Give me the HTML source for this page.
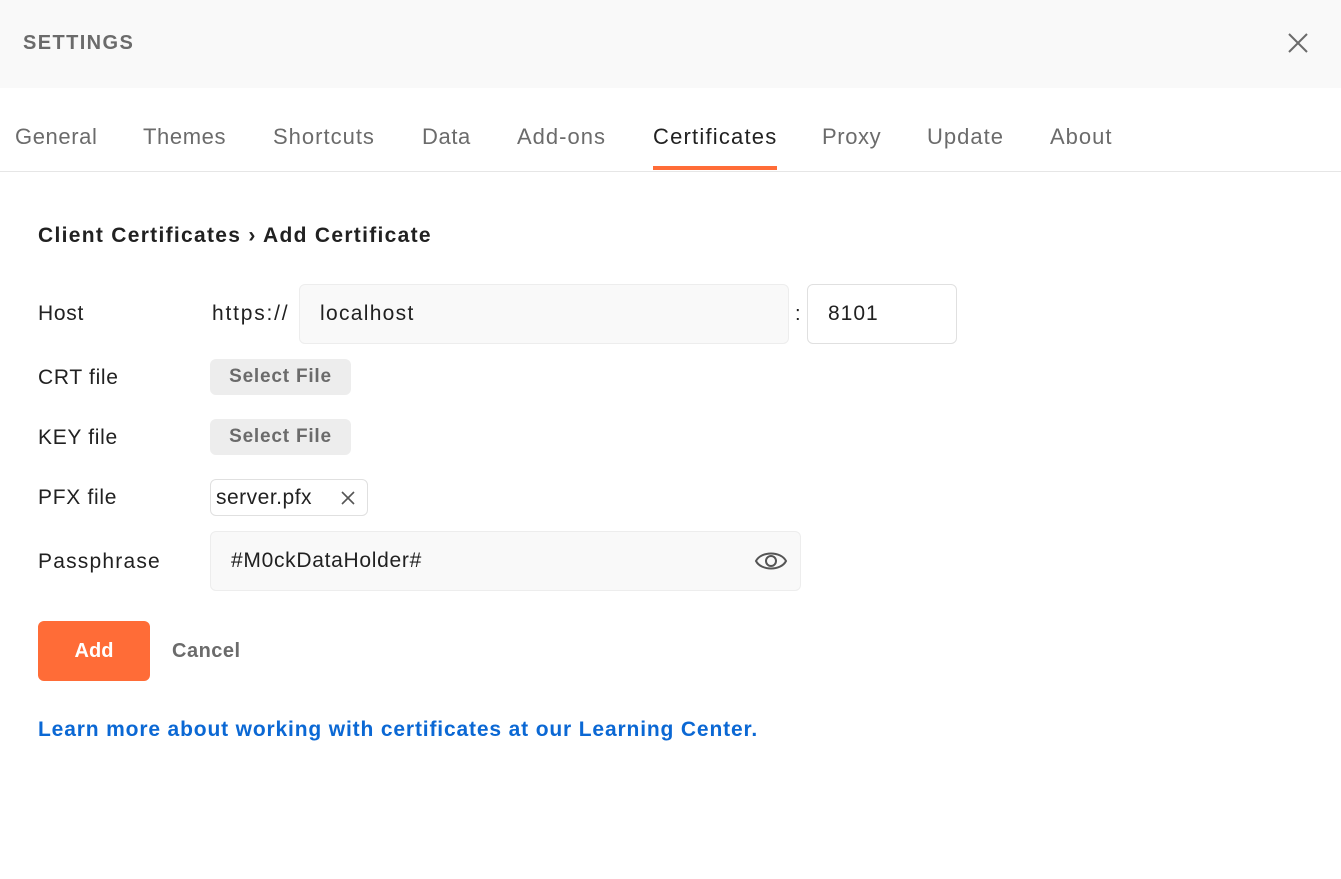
<!DOCTYPE html>
<html><head><meta charset="utf-8"><style>
*{margin:0;padding:0;box-sizing:border-box}
body{width:1341px;height:879px;background:#fff;font-family:"Liberation Sans",sans-serif;position:relative;overflow:hidden;color:#212121}
.a{position:absolute;white-space:nowrap}
.hdr{position:absolute;left:0;top:0;width:1341px;height:88px;background:#f9f9f9}
.tab{position:absolute;top:124px;font-size:22px;color:#6b6b6b;line-height:26px;letter-spacing:0.6px}
.lbl{position:absolute;left:38px;font-size:21px;color:#212121;line-height:24px;letter-spacing:0.7px}
.t{font-size:21px;letter-spacing:1px}
.btn{position:absolute;left:210px;width:141px;height:36px;background:#ededed;border-radius:6px;font-size:19px;font-weight:bold;color:#6b6b6b;text-align:center;line-height:36px;letter-spacing:0.8px}
</style></head><body>
<div class="hdr"></div>
<div class="a" style="left:23px;top:31px;font-size:20px;font-weight:bold;color:#6b6b6b;line-height:24px;letter-spacing:1.4px">SETTINGS</div>
<svg class="a" style="left:1286px;top:31px" width="24" height="24" viewBox="0 0 24 24"><path d="M3 3L21 21M21 3L3 21" stroke="#6b6b6b" stroke-width="2"/></svg>
<div class="tab" style="left:15px">General</div>
<div class="tab" style="left:143px">Themes</div>
<div class="tab" style="left:273px;letter-spacing:1px">Shortcuts</div>
<div class="tab" style="left:422px">Data</div>
<div class="tab" style="left:517px;letter-spacing:1px">Add-ons</div>
<div class="tab" style="left:653px;color:#212121;letter-spacing:1.2px">Certificates</div>
<div class="tab" style="left:822px">Proxy</div>
<div class="tab" style="left:927px;letter-spacing:1px">Update</div>
<div class="tab" style="left:1050px;letter-spacing:1px">About</div>
<div class="a" style="left:653px;top:166px;width:124px;height:4px;background:#ff6c37"></div>
<div class="a" style="left:0;top:171px;width:1341px;height:1px;background:#e6e6e6"></div>
<div class="a" style="left:38px;top:223px;font-size:21px;font-weight:bold;line-height:26px;letter-spacing:1.3px">Client Certificates › Add Certificate</div>
<div class="lbl" style="top:302px">Host</div>
<div class="a t" style="left:212px;top:302px;line-height:24px;letter-spacing:1.8px">https://</div>
<div class="a t" style="left:299px;top:284px;width:490px;height:60px;background:#f9f9f9;border:1px solid #ededed;border-radius:6px;line-height:58px;padding-left:20px;letter-spacing:1.3px">localhost</div>
<div class="a" style="left:795px;top:302px;font-size:20px;line-height:24px">:</div>
<div class="a t" style="left:807px;top:284px;width:150px;height:60px;background:#fff;border:1px solid #e0e0e0;border-radius:6px;line-height:58px;padding-left:20px">8101</div>
<div class="lbl" style="top:366px">CRT file</div>
<div class="btn" style="top:359px">Select File</div>
<div class="lbl" style="top:426px">KEY file</div>
<div class="btn" style="top:419px">Select File</div>
<div class="lbl" style="top:486px">PFX file</div>
<div class="a t" style="left:210px;top:479px;width:158px;height:37px;border:1px solid #e0e0e0;border-radius:6px;line-height:35px;padding-left:5px;letter-spacing:0.5px">server.pfx</div>
<svg class="a" style="left:340px;top:490px" width="16" height="16" viewBox="0 0 16 16"><path d="M2 2L14 14M14 2L2 14" stroke="#555" stroke-width="1.6"/></svg>
<div class="lbl" style="top:550px;letter-spacing:1.2px">Passphrase</div>
<div class="a t" style="left:210px;top:531px;width:591px;height:60px;background:#f9f9f9;border:1px solid #ededed;border-radius:6px;line-height:58px;padding-left:20px;letter-spacing:0.7px">#M0ckDataHolder#</div>
<svg class="a" style="left:754px;top:547px" width="34" height="28" viewBox="0 0 34 28"><path d="M2 14C7 4 27 4 32 14C27 24 7 24 2 14Z" fill="none" stroke="#555" stroke-width="2"/><circle cx="17" cy="14" r="5" fill="none" stroke="#555" stroke-width="2"/></svg>
<div class="a" style="left:38px;top:621px;width:112px;height:60px;background:#ff6c37;border-radius:6px;color:#fff;font-size:20px;font-weight:bold;text-align:center;line-height:60px">Add</div>
<div class="a" style="left:172px;top:639px;font-size:20px;font-weight:bold;color:#6b6b6b;line-height:24px;letter-spacing:0.5px">Cancel</div>
<div class="a" style="left:38px;top:717px;font-size:21px;font-weight:bold;color:#0b68d4;line-height:26px;letter-spacing:0.85px">Learn more about working with certificates at our Learning Center.</div>
</body></html>
